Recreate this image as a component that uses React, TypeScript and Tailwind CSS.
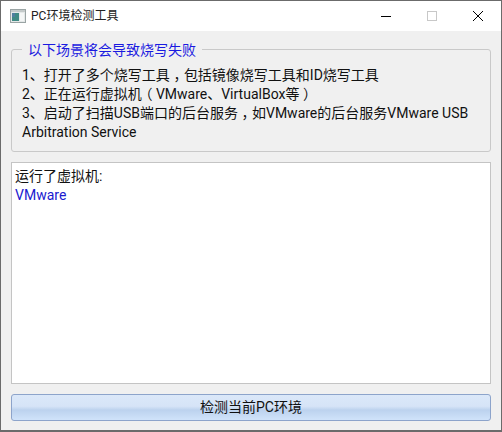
const font = { fontFamily: 'Roboto, "Noto Sans CJK SC", sans-serif' };

function AppIcon() {
  return (
    <svg width="16" height="14" viewBox="0 0 16 14" className="shrink-0">
      <rect x="0.5" y="0.5" width="15" height="13" fill="#e4e8e8" stroke="#9aa4a4" />
      <rect x="1" y="1" width="14" height="2" fill="#c4caca" />
      <rect x="2" y="4" width="7" height="8" fill="#3f8a84" />
      <rect x="2" y="4" width="3" height="4" fill="#4f7f9f" />
      <rect x="10" y="4" width="4" height="8" fill="#f4f6f6" />
    </svg>
  );
}

// full-width punctuation sits centred in its cell in the reference
function Punct({ children }: { children: string }) {
  return (
    <span className="inline-block w-[14px] text-center [font-feature-settings:'halt']">{children}</span>
  );
}

export default function App() {
  return (
    <div
      className="w-[502px] h-[432px] flex flex-col overflow-hidden border border-b-2 border-[#6b6b6b] bg-[#f0f0f0] text-[14px] leading-[19px] text-[#111]"
      style={font}
    >
      {/* Title bar */}
      <div className="h-[30px] shrink-0 flex items-center bg-white pl-[9px]">
        <AppIcon />
        <span className="ml-[5px] text-[12px] text-[#222]">PC环境检测工具</span>
        <div className="ml-auto flex items-center">
          <div className="w-[46px] flex justify-center">
            <svg width="10" height="10" viewBox="0 0 10 10">
              <line x1="0" y1="5.5" x2="10" y2="5.5" stroke="#000" />
            </svg>
          </div>
          <div className="w-[46px] flex justify-center">
            <div className="w-[10px] h-[10px] border border-[#c8c8c8]" />
          </div>
          <div className="w-[46px] flex justify-center">
            <svg width="10" height="10" viewBox="0 0 10 10">
              <path d="M0 0 L10 10 M10 0 L0 10" stroke="#000" fill="none" />
            </svg>
          </div>
        </div>
      </div>

      <div className="flex-1 flex flex-col pt-[18px] pb-[10px] px-[10px]">
        {/* Group box */}
        <div className="relative h-[103px] shrink-0 rounded-[3px] border border-[#c9c9c9] pt-[16px] pl-[10px] pr-[8px]">
          <span className="absolute left-[10px] top-[-9px] bg-[#f0f0f0] px-[6px] text-[#1a1ae0]">
            以下场景将会导致烧写失败
          </span>
          <p>1、打开了多个烧写工具<Punct>，</Punct>包括镜像烧写工具和ID烧写工具</p>
          <p>2、正在运行虚拟机<Punct>（</Punct>VMware、VirtualBox等<Punct>）</Punct></p>
          <p>3、启动了扫描USB端口的后台服务<Punct>，</Punct>如VMware的后台服务VMware USB</p>
          <p>Arbitration Service</p>
        </div>

        {/* Result box */}
        <div className="mt-[10px] h-[222px] shrink-0 border border-[#c4c4c4] bg-white pt-[4px] pl-[3px]">
          <p>运行了虚拟机:</p>
          <p className="text-[#1a1ad0]">VMware</p>
        </div>

        {/* Button */}
        <button className="mt-[10px] h-[27px] shrink-0 rounded-[3px] border border-[#8da4cb] bg-[linear-gradient(to_bottom,#dbe8f9_0%,#d6e4f7_45%,#bcd2ee_60%,#d0e3fa_100%)] text-center text-[#111]">
          检测当前PC环境
        </button>
      </div>
    </div>
  );
}
